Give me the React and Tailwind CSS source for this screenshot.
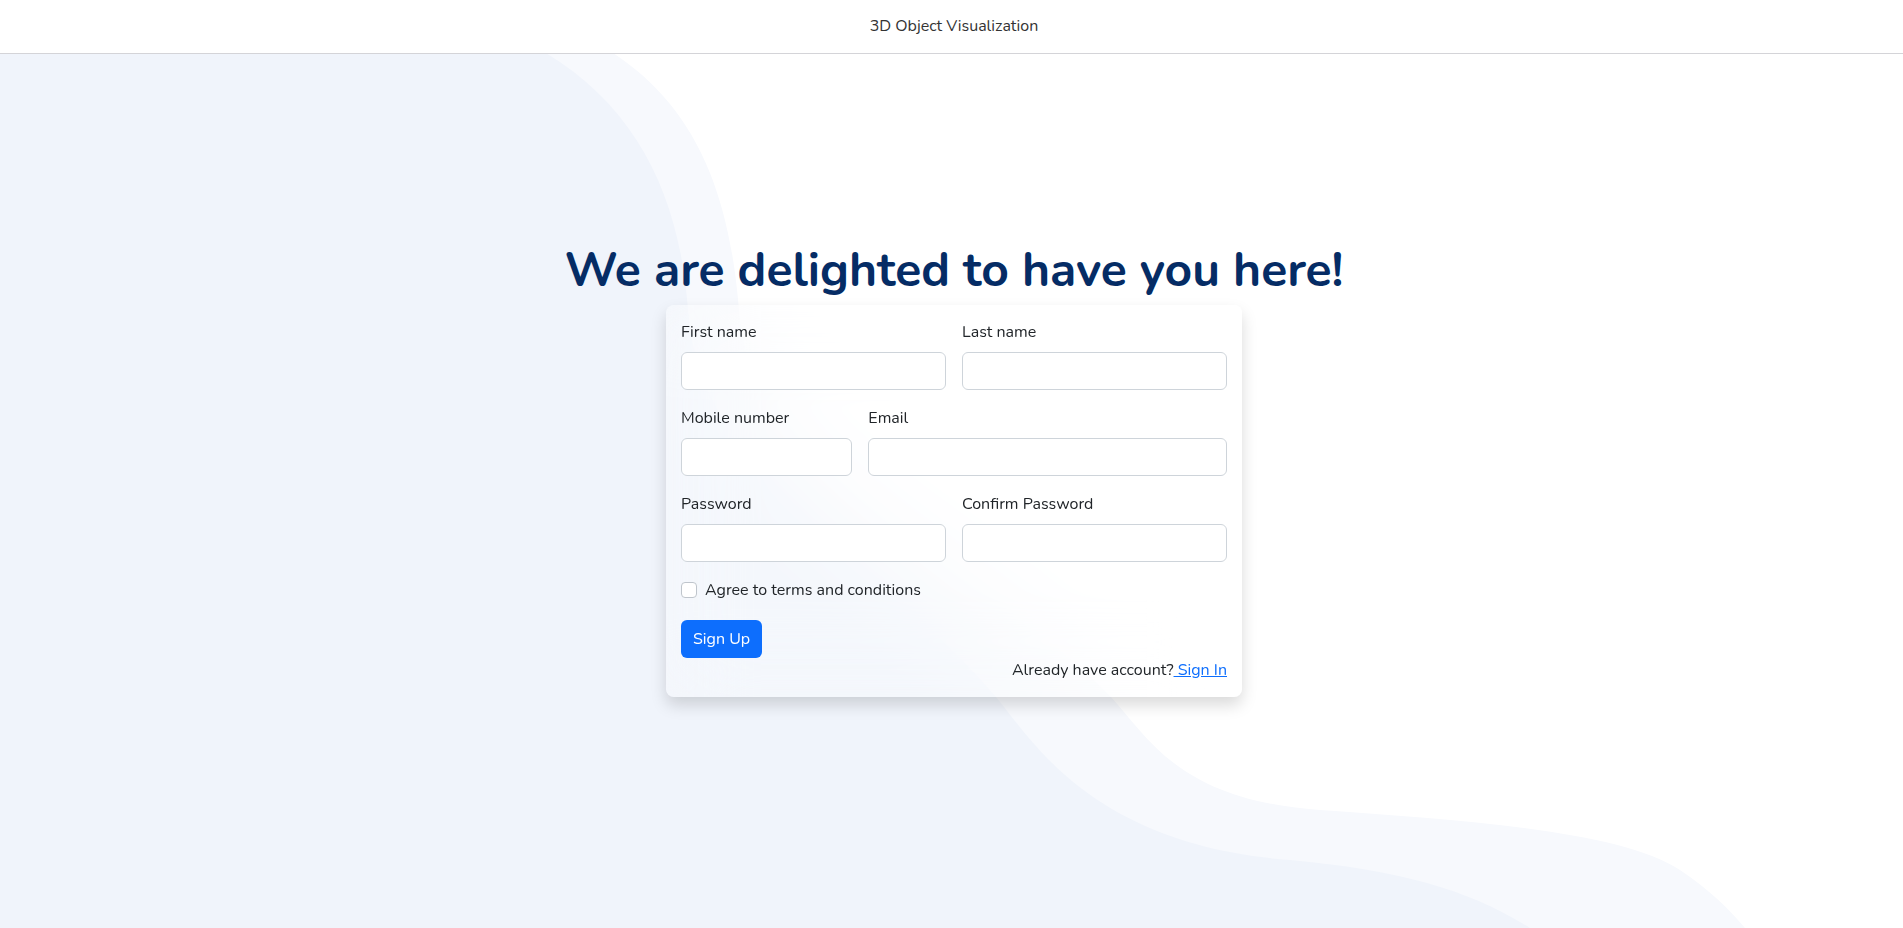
import React from 'react';

const font = { fontFamily: 'Nunito, Lato, "Noto Sans", sans-serif' };

const Field = ({ label, type = 'text', className = '' }) => (
    <div className={className}>
        <label className="block mb-2 leading-6">{label}</label>
        <input
            type={type}
            className="block w-full h-[38px] px-3 bg-white border border-[#ced4da] rounded-md text-base text-[#212529] focus:outline-none"
        />
    </div>
);

const Waves = () => (
    <svg
        className="absolute inset-0 w-full h-full"
        viewBox="0 0 1903 928"
        preserveAspectRatio="none"
        aria-hidden="true"
    >
        <path
            fill="#f7f9fd"
            d="M613 53 C700 110, 730 200, 739 310 C750 480, 980 560, 1111 697 C1150 740, 1180 800, 1320 810 C1460 820, 1620 830, 1680 870 C1710 890, 1730 910, 1745 928 L0 928 L0 53 Z"
        />
        <path
            fill="#f0f4fb"
            d="M546 53 C640 110, 680 200, 688 310 C700 480, 880 560, 996 697 C1030 737, 1090 845, 1290 860 C1400 870, 1470 890, 1530 928 L0 928 L0 53 Z"
        />
    </svg>
);

export default function App() {
    return (
        <div className="relative min-h-screen overflow-hidden bg-white text-[#212529]" style={font}>
            <Waves />
            <header className="relative z-10 h-[54px] flex items-center justify-center bg-white border-b border-[#d4d4d8] pb-[2px] pl-[5px]">
                <span className="text-base text-[#333]">3D Object Visualization</span>
            </header>

            <main className="relative z-10 flex flex-col items-center pt-[188px] pl-[5px]">
                <h1 className="text-[48px] leading-[1.2] font-bold text-[#052c65] mb-[5px]">
                    We are delighted to have you here!
                </h1>

                <div className="w-[576px] px-[15px] pt-[15px] pb-[15px] rounded-lg bg-white/30 backdrop-blur-2xl shadow-[0_8px_16px_rgba(0,0,0,0.15)]">
                    <div className="grid grid-cols-2 gap-x-4">
                        <Field label="First name" />
                        <Field label="Last name" />
                    </div>
                    <div className="grid grid-cols-3 gap-x-4 mt-4">
                        <Field label="Mobile number" type="tel" />
                        <Field label="Email" type="email" className="col-span-2" />
                    </div>
                    <div className="grid grid-cols-2 gap-x-4 mt-4">
                        <Field label="Password" type="password" />
                        <Field label="Confirm Password" type="password" />
                    </div>

                    <label className="flex items-center gap-2 mt-4 leading-6">
                        <input
                            type="checkbox"
                            className="appearance-none w-4 h-4 bg-white border border-[#bfc5cc] rounded"
                        />
                        <span>Agree to terms and conditions</span>
                    </label>

                    <button
                        type="button"
                        className="mt-[18px] h-[38px] px-3 bg-[#0d6efd] text-white rounded-md text-base"
                    >
                        Sign Up
                    </button>

                    <p className="text-right leading-6">
                        Already have account?
                        <a href="#" className="text-[#0d6efd] underline"> Sign In</a>
                    </p>
                </div>
            </main>
        </div>
    );
}
